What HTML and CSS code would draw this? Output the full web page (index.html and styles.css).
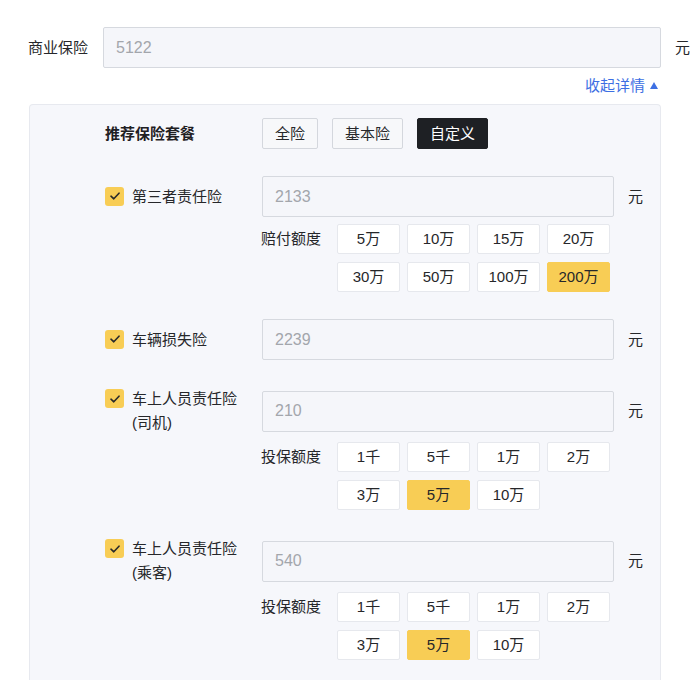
FILE: index.html
```html
<!DOCTYPE html>
<html lang="zh-CN">
<head>
<meta charset="utf-8">
<title>商业保险</title>
<link rel="stylesheet" href="styles.css">
</head>
<body>
<div class="page">
  <div class="top-row">
    <span class="top-label">商业保险</span>
    <div class="field field-wide">5122</div>
    <span class="unit">元</span>
  </div>
  <div class="collapse-row">
    <a class="collapse">收起详情<svg class="tri" viewBox="0 0 8 7" width="8" height="7"><path d="M4 0 L8 7 L0 7 Z" fill="#3d6fe3"/></svg></a>
  </div>
  <div class="panel">
    <div class="plan-row">
      <span class="plan-label">推荐保险套餐</span>
      <div class="plan-btns">
        <span class="plan-btn">全险</span>
        <span class="plan-btn">基本险</span>
        <span class="plan-btn plan-btn-on">自定义</span>
      </div>
    </div>

    <div class="item">
      <div class="item-head">
        <div class="check"><span class="box"><svg viewBox="0 0 10 8" width="10" height="8"><path d="M1 4.2 L3.8 6.8 L9 1.2" fill="none" stroke="#2a2a2a" stroke-width="1.6" stroke-linecap="round" stroke-linejoin="round"/></svg></span><span class="name">第三者责任险</span></div>
        <div class="field">2133</div>
        <span class="unit">元</span>
      </div>
      <div class="amounts">
        <span class="amt-label">赔付额度</span>
        <div class="amt-grid">
          <span class="amt">5万</span><span class="amt">10万</span><span class="amt">15万</span><span class="amt">20万</span>
          <span class="amt">30万</span><span class="amt">50万</span><span class="amt">100万</span><span class="amt amt-on">200万</span>
        </div>
      </div>
    </div>

    <div class="item">
      <div class="item-head">
        <div class="check"><span class="box"><svg viewBox="0 0 10 8" width="10" height="8"><path d="M1 4.2 L3.8 6.8 L9 1.2" fill="none" stroke="#2a2a2a" stroke-width="1.6" stroke-linecap="round" stroke-linejoin="round"/></svg></span><span class="name">车辆损失险</span></div>
        <div class="field">2239</div>
        <span class="unit">元</span>
      </div>
    </div>

    <div class="item">
      <div class="item-head">
        <div class="check"><span class="box"><svg viewBox="0 0 10 8" width="10" height="8"><path d="M1 4.2 L3.8 6.8 L9 1.2" fill="none" stroke="#2a2a2a" stroke-width="1.6" stroke-linecap="round" stroke-linejoin="round"/></svg></span><span class="name">车上人员责任险<br>(司机)</span></div>
        <div class="field">210</div>
        <span class="unit">元</span>
      </div>
      <div class="amounts">
        <span class="amt-label">投保额度</span>
        <div class="amt-grid">
          <span class="amt">1千</span><span class="amt">5千</span><span class="amt">1万</span><span class="amt">2万</span>
          <span class="amt">3万</span><span class="amt amt-on">5万</span><span class="amt">10万</span>
        </div>
      </div>
    </div>

    <div class="item">
      <div class="item-head">
        <div class="check"><span class="box"><svg viewBox="0 0 10 8" width="10" height="8"><path d="M1 4.2 L3.8 6.8 L9 1.2" fill="none" stroke="#2a2a2a" stroke-width="1.6" stroke-linecap="round" stroke-linejoin="round"/></svg></span><span class="name">车上人员责任险<br>(乘客)</span></div>
        <div class="field">540</div>
        <span class="unit">元</span>
      </div>
      <div class="amounts">
        <span class="amt-label">投保额度</span>
        <div class="amt-grid">
          <span class="amt">1千</span><span class="amt">5千</span><span class="amt">1万</span><span class="amt">2万</span>
          <span class="amt">3万</span><span class="amt amt-on">5万</span><span class="amt">10万</span>
        </div>
      </div>
    </div>
  </div>
</div>
</body>
</html>
```

FILE: styles.css
```css
* { box-sizing: border-box; }
html, body { margin: 0; padding: 0; background: #ffffff; }
body {
  font-family: "Liberation Sans", "Noto Sans CJK SC", sans-serif;
  font-size: 15px;
  color: #26272a;
  line-height: 24px;
}
.page {
  width: 700px;
  height: 680px;
  overflow: hidden;
  padding: 27px 0 0 28px;
}
.top-row {
  display: flex;
  align-items: center;
}
.top-label {
  width: 61px;
  margin-right: 14px;
}
.field {
  width: 352px;
  height: 41px;
  border: 1px solid #d6d9df;
  border-radius: 2px;
  background: #f5f6fa;
  color: #a3a6ac;
  padding-left: 12px;
  font-size: 16px;
  display: flex;
  align-items: center;
  flex: none;
}
.field-wide { width: 558px; }
.unit {
  margin-left: 14px;
}
.collapse-row {
  width: 633px;
  display: flex;
  justify-content: flex-end;
  margin-top: 6px;
  padding-right: 3px;
}
.collapse {
  color: #3d6fe3;
  display: flex;
  align-items: center;
}
.tri {
  margin-left: 5px;
  margin-top: -2px;
}
.panel {
  margin-top: 6px;
  margin-left: 1px;
  width: 632px;
  height: 600px;
  border: 1px solid #e7e9ef;
  border-bottom: none;
  border-radius: 4px 4px 0 0;
  background: #f6f7fb;
  padding: 13px 0 0 75px;
}
.plan-row {
  display: flex;
  align-items: center;
  height: 31px;
}
.plan-label {
  width: 157px;
  font-weight: bold;
  color: #1f2023;
}
.plan-btns {
  display: flex;
  gap: 14px;
}
.plan-btn {
  height: 31px;
  padding: 0 12px;
  border: 1px solid #d4d7dd;
  border-radius: 2px;
  background: #f7f8fa;
  display: flex;
  align-items: center;
}
.plan-btn-on {
  background: #1e2024;
  border-color: #1e2024;
  color: #ffffff;
}
.item {
  margin-top: 27px;
}
.item-head {
  display: flex;
  align-items: center;
}
.check {
  width: 157px;
  flex: none;
  display: flex;
  align-items: flex-start;
}
.box {
  width: 19px;
  height: 19px;
  border-radius: 3px;
  background: #f8cd55;
  margin-top: 2px;
  margin-right: 8px;
  display: flex;
  align-items: center;
  justify-content: center;
  flex: none;
}
.amounts {
  margin-left: 156px;
  margin-top: 7px;
  display: flex;
  align-items: flex-start;
}
.amt-label {
  width: 60px;
  margin-right: 16px;
  line-height: 30px;
}
.amt-grid {
  display: grid;
  grid-template-columns: repeat(4, 63px);
  column-gap: 7px;
  row-gap: 8px;
}
.amt {
  height: 30px;
  background: #ffffff;
  border: 1px solid #e6e8ed;
  border-radius: 2px;
  display: flex;
  align-items: center;
  justify-content: center;
}
.amt-on {
  background: #f8cd55;
  border-color: #f8cd55;
}
```
